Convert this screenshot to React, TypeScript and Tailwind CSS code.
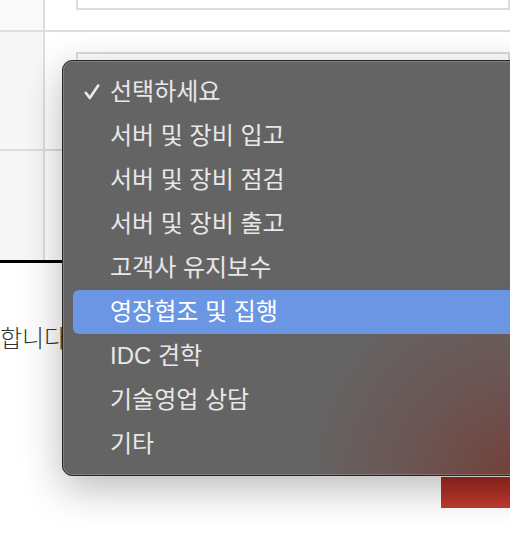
import React from "react";

const options = [
  "선택하세요",
  "서버 및 장비 입고",
  "서버 및 장비 점검",
  "서버 및 장비 출고",
  "고객사 유지보수",
  "영장협조 및 집행",
  "IDC 견학",
  "기술영업 상담",
  "기타",
];

const font = { fontFamily: '"Liberation Sans", "Noto Sans CJK KR", sans-serif' };

function Check() {
  return (
    <svg width="16" height="16" viewBox="0 0 16 16" fill="none">
      <path d="M1.8 8.8 L5.8 14 L14.2 1.6" stroke="#ebebeb" strokeWidth="2.6" strokeLinecap="round" strokeLinejoin="round" />
    </svg>
  );
}

function SelectMenu() {
  const selected = 0;
  const hovered = 5;

  return (
    <div className="absolute left-[62px] top-[60px] w-[480px] rounded-[10px] border border-[#262626] bg-[#656464] bg-[radial-gradient(circle_at_450px_420px,rgba(125,40,30,0.6)_0px,rgba(125,40,30,0.25)_100px,rgba(125,40,30,0)_210px)] px-[10px] py-[9px] shadow-[0_12px_40px_rgba(0,0,0,0.28),inset_0_0_0_1px_rgba(255,255,255,0.18)]">
      {options.map((opt, i) => (
        <div
          key={opt}
          className={
            "flex h-[44px] items-center rounded-[6px] text-[24px] " +
            (i === hovered ? "bg-[#6a96e4] text-white" : "text-[#e8e8e8]")
          }
        >
          <span className="flex w-[37px] items-center pl-[11px]">{i === selected ? <Check /> : null}</span>
          <span>{opt}</span>
        </div>
      ))}
    </div>
  );
}

export default function App() {
  return (
    <div className="relative h-[536px] w-[510px] overflow-hidden bg-white" style={font}>
      <div className="flex border-b-2 border-[#dedede]">
        <div className="w-[45px] border-r-2 border-[#dedede] bg-[#f9f9f9]" />
        <div className="h-[30px] flex-1 pl-[31px]">
          <div className="-mt-[20px] h-[30px] border-2 border-[#dcdcdc] bg-white" />
        </div>
      </div>
      <div className="flex border-b-2 border-[#dedede]">
        <div className="w-[45px] border-r-2 border-[#dedede] bg-[#f7f7f7]" />
        <div className="h-[117px] flex-1 pl-[31px] pt-[20px]">
          <div className="h-[40px] border-2 border-[#dcdcdc] bg-white" />
        </div>
      </div>
      <div className="flex border-b-[3px] border-black">
        <div className="h-[109px] w-[45px] border-r-2 border-[#dedede] bg-[#f6f6f6]" />
        <div className="flex-1" />
      </div>
      <div className="whitespace-nowrap pt-[61px] text-[24px] leading-[30px] font-light text-[#333]">합니다</div>
      <div className="flex justify-end pt-[123px]">
        <div className="h-[31px] w-[69px] bg-gradient-to-b from-[#a22a21] to-[#c23a2f]" />
      </div>
      <SelectMenu />
    </div>
  );
}
